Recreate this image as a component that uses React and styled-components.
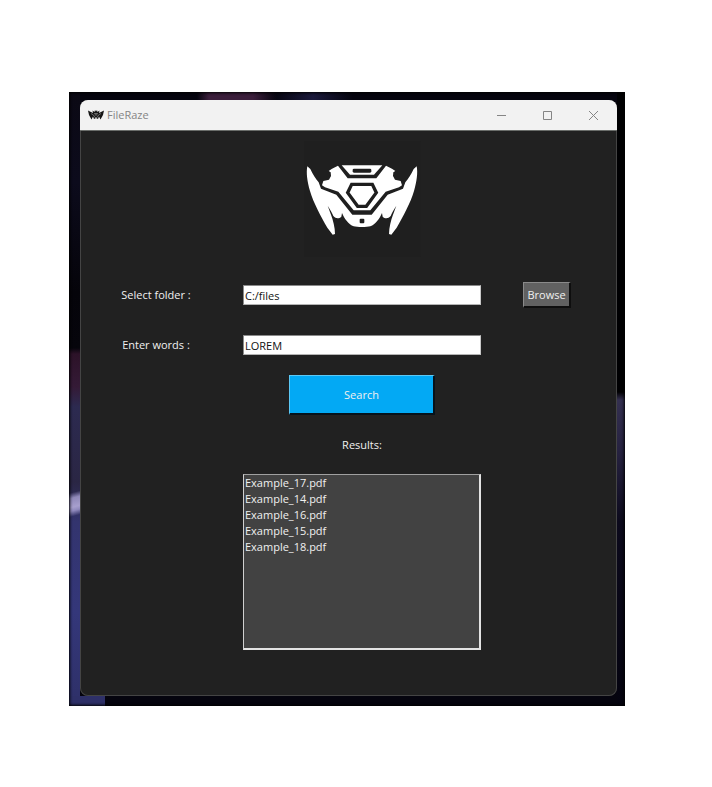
import React, { useState } from "react";
import styled, { createGlobalStyle } from "styled-components";

const GlobalStyle = createGlobalStyle`
  * { box-sizing: border-box; }
  body { margin: 0; background: #ffffff; font-family: "Open Sans", "Noto Sans", sans-serif; }
  button, input, select { font: inherit; margin: 0; }
`;

const Page = styled.main`
  padding: 92px 87px 81px 69px;
`;

const Desktop = styled.div`
  padding: 8px 8px 10px 11px;
  box-shadow: inset 0 0 3px 1px #000000;
  background:
    linear-gradient(90deg, #0b091400, #3c1f3c 15%, #3c1f3c 70%, #0b091400) 128px 0 / 80px 8px no-repeat,
    linear-gradient(90deg, #07061200, #1b1a3c, #07061200) 204px 0 / 80px 8px no-repeat,
    linear-gradient(165deg, #2d294600 20%, #8f88b8 35%, #a79fce 60%, #8f89bd 70%, #33347a00 85%) 0 394px / 11px 34px no-repeat,
    linear-gradient(#2e3068, #2e3068) 0 100% / 36px 10px no-repeat,
    linear-gradient(#0b0914 0, #0c0b1c 90px, #05040a 200px, #06050c 256px, #2c1228 262px, #341a36 295px, #2c2a50 315px, #2a2644 390px, #33346e 430px, #34377a 520px, #2e3068 100%) 0 0 / 11px 100% no-repeat,
    linear-gradient(#000002 0, #000002 300px, #343050 308px, #262240 360px, #0c0a1c 430px, #04030f 100%) 100% 0 / 8px 100% no-repeat,
    #05040e;
`;

const Window = styled.section`
  border-radius: 8px;
  overflow: hidden;
  background: #212121;
  box-shadow: inset 0 0 0 1px #444444;
`;

const TitleBar = styled.header`
  display: flex;
  align-items: center;
  height: 31px;
  padding: 0 1px 0 8px;
  border-bottom: 1px solid #6a6d6a;
  background: #f2f2f2;
`;

const Title = styled.h1`
  flex: 1;
  margin: 0 0 0 3px;
  font-size: 11px;
  font-weight: 400;
  line-height: 16px;
  color: #858585;
`;

const CaptionButton = styled.button`
  display: grid;
  place-items: center;
  width: 46px;
  height: 30px;
  padding: 0;
  border: 0;
  background: transparent;
  color: #858585;
`;

const Form = styled.form`
  display: grid;
  grid-template-columns: 152fr 260fr 110fr;
  grid-template-rows: 139px 50px 50px 50px 50px auto;
  align-items: center;
  padding: 0 15px 46px 0;
  font-size: 11px;
  line-height: 16px;
  color: #f0f0f0;
`;

const LogoCell = styled.div`
  grid-column: 2;
  align-self: start;
  justify-self: center;
  padding-top: 9px;
  line-height: 0;
`;

const Label = styled.label`
  grid-column: ${(p) => p.$column};
  justify-self: center;
`;

const Field = styled.div`
  grid-column: 2;
  padding: 0 11px;
`;

const Entry = styled.input`
  display: block;
  width: 100%;
  height: 20px;
  padding: 0 1px;
  border: 1px solid;
  border-color: #8a8a8a #c8c8c8 #b4b4b4 #8a8a8a;
  border-radius: 0;
  background: #ffffff;
  color: #111111;
  line-height: 16px;
  outline: 0;
`;

const PushButton = styled.button`
  justify-self: center;
  grid-column: ${(p) => (p.$primary ? 2 : 3)};
  width: ${(p) => (p.$primary ? "146px" : "48px")};
  height: ${(p) => (p.$primary ? "40px" : "26px")};
  padding: 0;
  border: 2px solid;
  border-color: ${(p) =>
    p.$primary ? "#5cc8f5 #06131c #06131c #5cc8f5" : "#8a8a8a #0e0e0e #0e0e0e #8a8a8a"};
  border-width: 1px 2px 2px 1px;
  background: ${(p) => (p.$primary ? "#03a9f4" : "#616161")};
  color: #f0f0f0;
`;

const ResultList = styled.select`
  display: block;
  width: 100%;
  height: 176px;
  margin-top: 4px;
  padding: 0;
  border: 2px solid;
  border-color: #a0a0a0 #e3e3e3 #e3e3e3 #d0d0d0;
  border-width: 1px 2px 2px 1px;
  border-radius: 0;
  background: #424242;
  color: #f0f0f0;
  overflow: hidden;
  outline: 0;
`;

const ResultOption = styled.option`
  height: 16px;
  min-height: 16px;
  padding: 0 1px;
  line-height: 16px;
`;

const TitleIcon = () => (
  <svg width="16" height="12" viewBox="0 0 32 24" aria-hidden="true">
    <path
      fill="#161616"
      d="M0 3 6 6 10 8 9 3 13 6 14 2 16 5 18 2 19 6 23 3 22 8 26 6 32 3 30 12 25 21 22 15 20 20 16 18 12 20 10 15 7 21 2 12Z"
    />
    <path fill="none" stroke="#bdbdbd" strokeWidth="1" d="M6 9 11 12 14 17H18L21 12 26 9M13 9H19L16 13Z" />
  </svg>
);

const Logo = () => (
  <svg width="130" height="120" viewBox="2 0 390 360" role="img" aria-label="FileRaze logo">
    <path fill="#1f1f1f" d="M24 4H372V350H24Z" />
    <g fill="#ffffff">
      <path d="M33 79 42 87C49 103 58 116 67 127L74 146 120 164 168 224H226L274 164 320 146 327 127C336 116 345 103 352 87L361 79C365 98 361 125 353 153 342 190 320 230 301 263L285 284 278 282C278 262 284 240 290 224L300 197C293 208 287 218 283 228 275 237 266 236 259 230L257 219C250 236 237 253 222 259 212 262 182 262 172 259 157 253 144 236 137 219L135 230C128 236 119 237 111 228 107 218 101 208 94 197L104 224C110 240 116 262 116 282L109 284 93 263C74 230 52 190 41 153 33 125 29 98 33 79Z" />
      <path d="M125 77 154 115H240L269 77 287 86 297 93 291 97 290 108 296 119 313 123 317 136 308 142 268 155 222 211H172L126 155 86 142 77 136 81 123 98 119 104 108 103 97 97 93 107 86Z" />
      <path d="M136 76H258L233 104H161Z" />
    </g>
    <rect x="169" y="86" width="56" height="12" rx="4" fill="#1e1e1e" />
    <path fill="#ffffff" stroke="#1e1e1e" strokeWidth="10" d="M166 133H228L240 158 210 199H184L154 158Z" />
    <rect x="190" y="236" width="14" height="14" rx="3" fill="#1e1e1e" />
  </svg>
);

const captions = [
  { name: "Minimize", path: "M1 5.5H10" },
  { name: "Maximize", path: "M1.5 1.5H9.5V9.5H1.5Z" },
  { name: "Close", path: "M1 1 10 10M10 1 1 10" },
];

const results = ["Example_17.pdf", "Example_14.pdf", "Example_16.pdf", "Example_15.pdf", "Example_18.pdf"];

export default function App() {
  const [folder, setFolder] = useState("C:/files");
  const [words, setWords] = useState("LOREM");

  return (
    <Page>
      <GlobalStyle />
      <Desktop>
        <Window>
          <TitleBar>
            <TitleIcon />
            <Title>FileRaze</Title>
            {captions.map((c) => (
              <CaptionButton key={c.name} type="button" aria-label={c.name}>
                <svg width="11" height="11" viewBox="0 0 11 11" fill="none" stroke="currentColor">
                  <path d={c.path} />
                </svg>
              </CaptionButton>
            ))}
          </TitleBar>
          <Form onSubmit={(e) => e.preventDefault()}>
            <LogoCell>
              <Logo />
            </LogoCell>
            <Label $column={1} htmlFor="folder">Select folder :</Label>
            <Field>
              <Entry id="folder" value={folder} onChange={(e) => setFolder(e.target.value)} />
            </Field>
            <PushButton type="button">Browse</PushButton>
            <Label $column={1} htmlFor="words">Enter words :</Label>
            <Field>
              <Entry id="words" value={words} onChange={(e) => setWords(e.target.value)} />
            </Field>
            <PushButton $primary type="submit">Search</PushButton>
            <Label $column={2} htmlFor="results">Results:</Label>
            <Field>
              <ResultList id="results" size={11}>
                {results.map((r) => (
                  <ResultOption key={r}>{r}</ResultOption>
                ))}
              </ResultList>
            </Field>
          </Form>
        </Window>
      </Desktop>
    </Page>
  );
}
